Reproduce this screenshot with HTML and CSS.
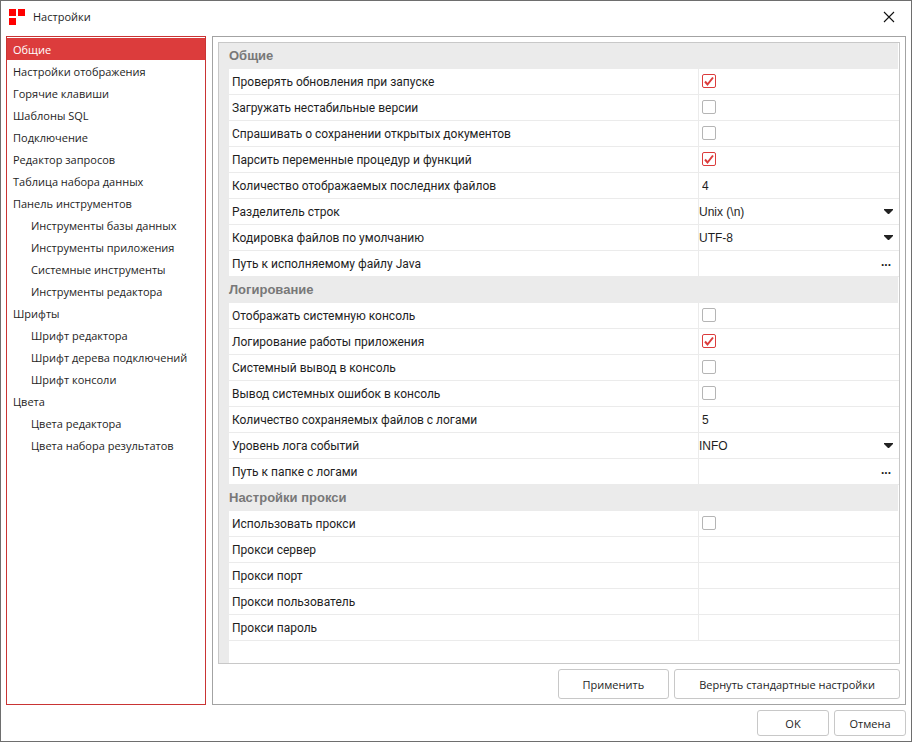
FILE: index.html
```html
<!DOCTYPE html>
<html lang="ru">
<head>
<meta charset="utf-8">
<title>Настройки</title>
<link rel="stylesheet" href="styles.css">
</head>
<body>
<div class="window">
  <header class="titlebar">
    <svg class="logo" width="16" height="16" viewBox="0 0 16 16" aria-hidden="true"><path fill="#f00" d="M0 0h7v7H0zM9 0h7v7H9zM0 9h7v7H0z"/></svg>
    <h1 class="title">Настройки</h1>
    <button class="close" type="button" aria-label="Закрыть"><svg width="12" height="12" viewBox="0 0 12 12"><path d="M1 1l10 10M11 1L1 11" stroke="#111" stroke-width="1.1" fill="none"/></svg></button>
  </header>
  <main class="body">
    <nav class="tree">
      <a class="node selected" href="#">Общие</a>
      <a class="node" href="#">Настройки отображения</a>
      <a class="node" href="#">Горячие клавиши</a>
      <a class="node" href="#">Шаблоны SQL</a>
      <a class="node" href="#">Подключение</a>
      <a class="node" href="#">Редактор запросов</a>
      <a class="node" href="#">Таблица набора данных</a>
      <a class="node" href="#">Панель инструментов</a>
      <a class="node child" href="#">Инструменты базы данных</a>
      <a class="node child" href="#">Инструменты приложения</a>
      <a class="node child" href="#">Системные инструменты</a>
      <a class="node child" href="#">Инструменты редактора</a>
      <a class="node" href="#">Шрифты</a>
      <a class="node child" href="#">Шрифт редактора</a>
      <a class="node child" href="#">Шрифт дерева подключений</a>
      <a class="node child" href="#">Шрифт консоли</a>
      <a class="node" href="#">Цвета</a>
      <a class="node child" href="#">Цвета редактора</a>
      <a class="node child" href="#">Цвета набора результатов</a>
    </nav>
    <section class="panel">
      <div class="props">
        <h2 class="group">Общие</h2>
        <div class="row"><label for="upd">Проверять обновления при запуске</label><div class="value"><input type="checkbox" id="upd" checked><svg class="tick" width="14" height="14" viewBox="0 0 14 14"><path d="M3 7.5L5.5 10.5L11 3.5"/></svg></div></div>
        <div class="row"><label for="unstable">Загружать нестабильные версии</label><div class="value"><input type="checkbox" id="unstable"></div></div>
        <div class="row"><label for="asksave">Спрашивать о сохранении открытых документов</label><div class="value"><input type="checkbox" id="asksave"></div></div>
        <div class="row"><label for="parse">Парсить переменные процедур и функций</label><div class="value"><input type="checkbox" id="parse" checked><svg class="tick" width="14" height="14" viewBox="0 0 14 14"><path d="M3 7.5L5.5 10.5L11 3.5"/></svg></div></div>
        <div class="row"><label for="recent">Количество отображаемых последних файлов</label><div class="value"><input class="text" type="text" id="recent" value="4"></div></div>
        <div class="row"><label for="eol">Разделитель строк</label><div class="value"><select id="eol"><option>Unix (\n)</option></select><svg class="arrow" width="9" height="5" viewBox="0 0 9 5"><path d="M0 0h9v1L5 5H4L0 1z"/></svg></div></div>
        <div class="row"><label for="enc">Кодировка файлов по умолчанию</label><div class="value"><select id="enc"><option>UTF-8</option></select><svg class="arrow" width="9" height="5" viewBox="0 0 9 5"><path d="M0 0h9v1L5 5H4L0 1z"/></svg></div></div>
        <div class="row"><label for="java">Путь к исполняемому файлу Java</label><div class="value"><input class="text" type="text" id="java"><button class="browse" type="button">...</button></div></div>

        <h2 class="group">Логирование</h2>
        <div class="row"><label for="console">Отображать системную консоль</label><div class="value"><input type="checkbox" id="console"></div></div>
        <div class="row"><label for="log">Логирование работы приложения</label><div class="value"><input type="checkbox" id="log" checked><svg class="tick" width="14" height="14" viewBox="0 0 14 14"><path d="M3 7.5L5.5 10.5L11 3.5"/></svg></div></div>
        <div class="row"><label for="sysout">Системный вывод в консоль</label><div class="value"><input type="checkbox" id="sysout"></div></div>
        <div class="row"><label for="syserr">Вывод системных ошибок в консоль</label><div class="value"><input type="checkbox" id="syserr"></div></div>
        <div class="row"><label for="logcount">Количество сохраняемых файлов с логами</label><div class="value"><input class="text" type="text" id="logcount" value="5"></div></div>
        <div class="row"><label for="level">Уровень лога событий</label><div class="value"><select id="level"><option>INFO</option></select><svg class="arrow" width="9" height="5" viewBox="0 0 9 5"><path d="M0 0h9v1L5 5H4L0 1z"/></svg></div></div>
        <div class="row"><label for="logpath">Путь к папке с логами</label><div class="value"><input class="text" type="text" id="logpath"><button class="browse" type="button">...</button></div></div>

        <h2 class="group">Настройки прокси</h2>
        <div class="row"><label for="proxy">Использовать прокси</label><div class="value"><input type="checkbox" id="proxy"></div></div>
        <div class="row"><label for="host">Прокси сервер</label><div class="value"><input class="text" type="text" id="host"></div></div>
        <div class="row"><label for="port">Прокси порт</label><div class="value"><input class="text" type="text" id="port"></div></div>
        <div class="row"><label for="user">Прокси пользователь</label><div class="value"><input class="text" type="text" id="user"></div></div>
        <div class="row"><label for="pass">Прокси пароль</label><div class="value"><input class="text" type="password" id="pass"></div></div>
      </div>
      <div class="actions">
        <button class="btn tall" type="button">Применить</button>
        <button class="btn tall" type="button">Вернуть стандартные настройки</button>
      </div>
    </section>
  </main>
  <footer class="footer">
    <button class="btn small" type="button">OK</button>
    <button class="btn small" type="button">Отмена</button>
  </footer>
</div>
</body>
</html>
```
FILE: styles.css
```css
* { box-sizing: border-box; }

body {
  margin: 0;
  background: #fff;
  color: #1e1e1e;
  font: 11px "Open Sans", "Noto Sans", sans-serif;
}

button, input, select { font: inherit; color: inherit; }

.window {
  min-height: 100vh;
  display: flex;
  flex-direction: column;
  border: 1px solid #6e6e6e;
}

.titlebar {
  display: flex;
  align-items: center;
  height: 35px;
  padding: 0 16px 4px 8px;
}
.title {
  flex: 1;
  margin: 0 0 0 8px;
  font-size: 11px;
  font-weight: 400;
}
.close {
  display: flex;
  padding: 0;
  border: 0;
  background: none;
}

.body {
  flex: 1;
  display: flex;
  gap: 6px;
  padding: 0 5px;
}

.tree {
  flex: 0 0 200px;
  padding-top: 1px;
  border: 1px solid #c93434;
}
.node {
  display: block;
  height: 22px;
  padding-left: 6px;
  line-height: 24px;
  color: inherit;
  text-decoration: none;
  white-space: nowrap;
}
.child { padding-left: 24px; }
.selected { background: #dc3c3c; color: #fff; }

.panel {
  flex: 1;
  display: flex;
  flex-direction: column;
  gap: 5px;
  padding: 5px;
  border: 1px solid #a3a3a3;
}

.props {
  flex: 1;
  border: 1px solid #c8c8c8;
  background: linear-gradient(#ebebeb, #ebebeb) left / 10px 100% no-repeat;
  padding-left: 10px;
  font: 12px "Liberation Sans", Arial, sans-serif;
}
.group {
  height: 26px;
  margin: 0 1px 0 0;
  background: #ebebeb;
  color: #787878;
  font-size: 13px;
  font-weight: 700;
  line-height: 26px;
}
.row {
  display: grid;
  grid-template-columns: 7fr 3fr;
  grid-template-rows: 25px;
  border-bottom: 1px solid #ebebeb;
}
.row label {
  padding-left: 3px;
  font-family: Roboto, "Liberation Sans", sans-serif;
  line-height: 27px;
}
.value {
  position: relative;
  display: flex;
  align-items: center;
  min-width: 0;
  border-left: 1px solid #ebebeb;
}

input[type="checkbox"] {
  appearance: none;
  width: 14px;
  height: 14px;
  margin: 0 0 1px 3px;
  border: 1px solid #b5b5b5;
  border-radius: 2px;
  background: #fff;
}
input[type="checkbox"]:checked { border-color: #dc3c3c; }
.tick {
  position: absolute;
  top: 5px;
  left: 3px;
  pointer-events: none;
  fill: none;
  stroke: #dc3c3c;
  stroke-width: 2;
}

.text {
  flex: 1;
  min-width: 0;
  height: 24px;
  padding: 0 3px;
  border: 0;
  background: none;
}
select {
  appearance: none;
  flex: 1;
  height: 24px;
  padding: 0;
  border: 0;
  background: none;
}
.arrow {
  position: absolute;
  right: 6px;
  pointer-events: none;
  fill: #222;
}
.browse {
  padding: 0 8px 3px;
  border: 0;
  background: none;
  font-weight: 700;
}

.actions {
  display: flex;
  justify-content: flex-end;
  gap: 5px;
}
.btn {
  padding: 0 24px;
  border: 1px solid #c8c8c8;
  border-radius: 3px;
  background: #fff;
}
.tall { height: 30px; }
.footer {
  display: flex;
  justify-content: flex-end;
  gap: 5px;
  padding: 5px;
}
.small {
  width: 72px;
  height: 26px;
  padding: 0;
}
```
